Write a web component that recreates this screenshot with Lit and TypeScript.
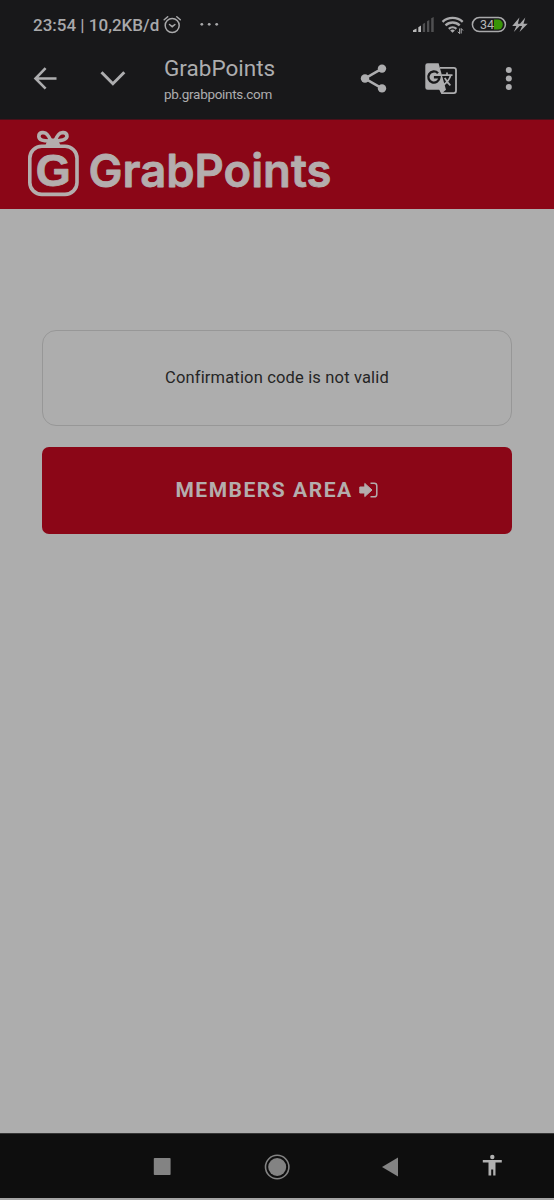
import { LitElement, html, css } from "lit";
import { customElement } from "lit/decorators.js";

@customElement("status-bar")
class StatusBar extends LitElement {
  static styles = css`
    :host { display: flex; height: 50px; box-sizing: border-box; color: #a9a9ab; font-family: Roboto, sans-serif; }
    svg { display: block; flex: none; }
    .clock { margin-left: 33px; width: 130px; font-size: 17px; line-height: 50px; font-weight: 500; white-space: nowrap; letter-spacing: 0; }
    .more { margin-left: 17px; }
    .right { margin-left: auto; }
    .pct { font: 400 12.5px Roboto, sans-serif; }
  `;
  render() {
    return html`
      <div class="clock">23:54 | 10,2KB/d</div>
      <svg width="20" height="50" viewBox="163 0 20 50" fill="none" stroke="#a9a9ab" stroke-width="1.5" stroke-linecap="round">
        <circle cx="172.2" cy="25.5" r="7" /><path d="M169.5 24.5l2.7 2.2 2.7-2.2M164.2 19.8l3.5-3M180.3 19.8l-3.5-3" />
      </svg>
      <svg class="more" width="20" height="50" viewBox="200 0 20 50" fill="#a9a9ab">
        <circle cx="201.8" cy="24.3" r="1.4" /><circle cx="209.2" cy="24.3" r="1.4" /><circle cx="216.7" cy="24.3" r="1.4" />
      </svg>
      <svg class="right" width="144" height="50" viewBox="410 0 144 50">
        <path d="M413 32v-1.8l3.5-1.7V32zM418.3 32v-4.8l2.7-1.6V32z" fill="#b7b7b8" />
        <path d="M422.8 32v-8l2.3-1.3V32zM427 32V21.2l2.3-1.3V32zM431.2 32V18.3l2.5-1.2V32z" fill="#505052" />
        <g fill="none" stroke="#a9a9ab" stroke-width="2.3">
          <path d="M442.5 21.8a15 15 0 0 1 20.2 0M445.5 25.4a10.2 10.2 0 0 1 14.2 0M448.8 28.8a5.5 5.5 0 0 1 7.6 0" />
        </g>
        <path d="M450.2 30.4q2.3-1.8 4.7 0l-2.4 2.4z" fill="#a9a9ab" />
        <path d="M459.6 28.5v5.2l-1.8-2M461.2 33.5v-5l1.8 2" fill="none" stroke="#a9a9ab" stroke-width="1" />
        <path d="M494 19.6h3.8a5 5 0 0 1 0 10H494z" fill="#389407" />
        <rect x="472.4" y="17.6" width="33" height="14" rx="7" fill="none" stroke="#a9a9ab" stroke-width="1.5" />
        <text class="pct" x="480" y="29.1" fill="#b7b7b8" textLength="14">34</text>
        <path d="M519.4 17.5l-7.2 8.5h4.2l-2.6 6 8-8.3h-3.9zM525.3 17.5l-7.2 8.5h4l-2.6 6 8.2-8.3h-4.2z" fill="#a9a9ab" />
      </svg>
    `;
  }
}

@customElement("browser-toolbar")
class BrowserToolbar extends LitElement {
  static styles = css`
    :host { display: flex; height: 69px; box-sizing: border-box; color: #adadaf; font-family: Roboto, sans-serif; }
    svg { display: block; flex: none; }
    .page { flex: 1; padding-top: 5px; white-space: nowrap; }
    .title { font-size: 22.5px; line-height: 27px; letter-spacing: 0; }
    .url { font-size: 13.5px; line-height: 18px; margin-top: 3px; letter-spacing: -0.3px; }
  `;
  render() {
    return html`
      <svg width="164" height="69" viewBox="0 50 164 69" fill="none" stroke="#adadaf" stroke-width="2.6">
        <path d="M56.5 78.5H36M45.6 68.2L35.5 78.5l10.1 10.2" /><path d="M101.5 72.3l11.4 11.4 11.4-11.4" stroke-width="3" />
      </svg>
      <div class="page"><div class="title">GrabPoints</div><div class="url">pb.grabpoints.com</div></div>
      <svg width="204" height="69" viewBox="350 50 204 69">
        <path d="M382 68.6l-17 9.9 17 9.9" stroke="#adadaf" stroke-width="2.6" fill="none" />
        <g fill="#adadaf"><circle cx="382" cy="68.6" r="4.2" /><circle cx="365" cy="78.5" r="4.2" /><circle cx="382" cy="88.4" r="4.2" /></g>
        <path d="M440 67.8h13.7a2.3 2.3 0 0 1 2.3 2.3v20.7a2.3 2.3 0 0 1-2.3 2.3H442l-3-6" fill="none" stroke="#adadaf" stroke-width="1.8" />
        <path d="M427.6 63.2h11l7.4 26.5-4.6 4-1.7-4H427.6a2.3 2.3 0 0 1-2.3-2.3V65.5a2.3 2.3 0 0 1 2.3-2.3z" fill="#adadaf" />
        <path d="M442.6 76h5.4l-3.3 6z" fill="#18181a" />
        <path d="M438 73.2a5.6 5.6 0 1 0 1.5 4.1h-5.6" fill="none" stroke="#18181a" stroke-width="2.4" />
        <path d="M441.5 75.2h11M447 72.6v2.6M450.6 75.5q-1.4 5.2-7 9.5M444.8 77.8q2 4.4 5.6 7.6" fill="none" stroke="#adadaf" stroke-width="1.7" />
        <g fill="#adadaf"><circle cx="508.8" cy="70" r="3" /><circle cx="508.8" cy="78.5" r="3" /><circle cx="508.8" cy="87" r="3" /></g>
      </svg>
    `;
  }
}

@customElement("brand-header")
class BrandHeader extends LitElement {
  static styles = css`
    :host { display: flex; height: 90px; box-sizing: border-box; background: #8b0617; border-top: 1px solid #48101a; }
    svg { display: block; }
    .word { font: 600 45px Inter, "Liberation Sans", sans-serif; }
    .mark { font: 700 45px "Liberation Sans", sans-serif; }
  `;
  render() {
    return html`
      <svg width="350" height="89" viewBox="0 120 350 89" fill="#b4adad" stroke="#b4adad">
        <rect x="29.8" y="146.2" width="47.2" height="48.2" rx="12" fill="none" stroke-width="3.6" />
        <g fill="none" stroke-width="3.6">
          <path d="M51 141q-12 .5-12.2-4.6c0-4.6 6.2-4.8 8.5-1.8q2 2.2 3.7 6.4zM54.8 141q12-.5 12.2-4.6c0-4.6-6.2-4.8-8.5-1.8q-2 2.2-3.7 6.4z" />
        </g>
        <path d="M48.2 138.5h9.4l3 7.2H45.2z" stroke="none" />
        <text class="mark" x="35.7" y="186.3" stroke-width=".8" stroke-linejoin="round">G</text>
        <text class="word" x="88.5" y="186.7" stroke-width=".8" stroke-linejoin="round" textLength="243" lengthAdjust="spacingAndGlyphs">GrabPoints</text>
      </svg>
    `;
  }
}

@customElement("page-content")
class PageContent extends LitElement {
  static styles = css`
    :host { display: flex; flex: 1; flex-direction: column; gap: 21px; padding: 121px 42px 0; background: #adadad; font-family: Roboto, sans-serif; }
    .notice { display: flex; align-items: center; justify-content: center; height: 96px; box-sizing: border-box; border: 1px solid #979797; border-radius: 14px; color: #252525; font-size: 16.5px; padding-bottom: 2px; letter-spacing: 0.16px; }
    .members { display: flex; align-items: center; justify-content: center; gap: 6px; height: 87px; box-sizing: border-box; border: 0; border-radius: 7px; padding: 0 1px 2px 0; background: #8b0617; color: #b4adad; font: 700 21px Roboto, sans-serif; letter-spacing: 1.53px; }
    svg { display: block; }
  `;
  render() {
    return html`
      <div class="notice">Confirmation code is not valid</div>
      <button class="members">
        <span>MEMBERS AREA</span>
        <svg width="19" height="16" viewBox="0 0 19 16">
          <path d="M.8 5h5V1.4L13 8l-7.2 6.6V11h-5z" fill="#b4adad" stroke="#b4adad" stroke-width="1" stroke-linejoin="round" />
          <path d="M11.5 1.2h3.7a2.6 2.6 0 0 1 2.6 2.6v8.4a2.6 2.6 0 0 1-2.6 2.6h-3.7" fill="none" stroke="#b4adad" stroke-width="1.5" />
        </svg>
      </button>
    `;
  }
}

@customElement("navigation-bar")
class NavigationBar extends LitElement {
  static styles = css`
    :host { display: block; height: 67px; box-sizing: border-box; background: #0e0e0e; border-top: 1px solid #363636; border-bottom: 2px solid #a5a5a5; }
    svg { display: block; }
  `;
  render() {
    return html`
      <svg width="554" height="64" viewBox="0 1134 554 64" fill="#838383">
        <rect x="153.8" y="1158" width="16.8" height="17" rx=".8" />
        <circle cx="277.2" cy="1167" r="9" />
        <circle cx="277.2" cy="1167" r="11.7" fill="none" stroke="#838383" stroke-width="1.6" />
        <path d="M382 1167l16-9.4v18.8z" />
        <g fill="#b0b0b0"><circle cx="492.3" cy="1157" r="2.2" /><path d="M482.8 1160h19v2.4h-6.3v13h-2.3v-6h-2v6h-2.7v-13h-5.7z" /></g>
      </svg>
    `;
  }
}

@customElement("app-root")
class AppRoot extends LitElement {
  static styles = css`
    :host { display: flex; flex-direction: column; width: 554px; height: 1200px; overflow: hidden; background: #18181a; }
    status-bar, browser-toolbar, brand-header, navigation-bar { flex: none; }
  `;
  render() {
    return html`
      <status-bar></status-bar>
      <browser-toolbar></browser-toolbar>
      <brand-header></brand-header>
      <page-content></page-content>
      <navigation-bar></navigation-bar>
    `;
  }
}
